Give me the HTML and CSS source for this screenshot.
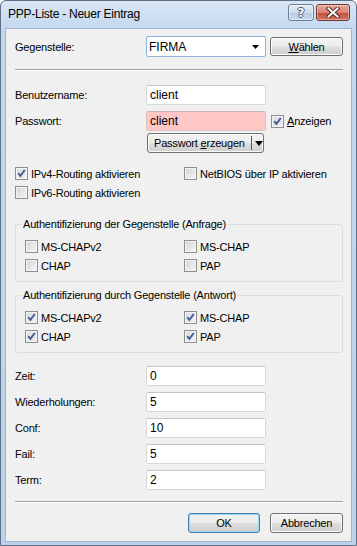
FILE: index.html
```html
<!DOCTYPE html>
<html lang="de">
<head>
<meta charset="utf-8">
<title>PPP-Liste - Neuer Eintrag</title>
<link rel="stylesheet" href="styles.css">
</head>
<body>
<div class="window">
  <div class="titlebar">
    <span class="title">PPP-Liste - Neuer Eintrag</span>
    <div class="caption-btns">
      <span class="cap help"><span class="q">?</span></span>
      <span class="cap close">
        <svg width="14" height="11" viewBox="0 0 14 11"><path d="M2.5 1.5 L11.5 9.5 M11.5 1.5 L2.5 9.5" stroke="#5a2620" stroke-width="4" stroke-linecap="square" fill="none"/><path d="M2.5 1.5 L11.5 9.5 M11.5 1.5 L2.5 9.5" stroke="#ffffff" stroke-width="2" stroke-linecap="square" fill="none"/></svg>
      </span>
    </div>
  </div>
  <div class="client">
    <div class="row-top">
      <span class="lbl">Gegenstelle:</span>
      <div class="combo"><span class="val">FIRMA</span><svg class="arr" width="7" height="4" viewBox="0 0 7 4"><path d="M0 0 H7 L3.5 4 Z" fill="#000"/></svg></div>
      <span class="btn btn-sm"><u>W</u>ählen</span>
    </div>
    <div class="sep sep-1"></div>
    <div class="frow mt14"><span class="lbl">Benutzername:</span><div class="tb">client</div></div>
    <div class="frow mt6"><span class="lbl">Passwort:</span><div class="tb pink">client</div>
      <span class="chk"><span class="cb on"><svg width="11" height="11" viewBox="0 0 11 11"><path d="M2.2 5.2 L4.4 7.8 L8.8 2" stroke="#4a5f97" stroke-width="2" fill="none"/></svg></span><span class="ct"><u>A</u>nzeigen</span></span>
    </div>
    <div class="genrow">
      <span class="btn split"><span class="main">Passwort <u>e</u>rzeugen</span><span class="div"></span><svg class="darr" width="8" height="5" viewBox="0 0 8 5"><path d="M0 0 H8 L4 5 Z" fill="#000"/></svg></span>
    </div>
    <div class="crow mt13">
      <span class="chk"><span class="cb on"><svg width="11" height="11" viewBox="0 0 11 11"><path d="M2.2 5.2 L4.4 7.8 L8.8 2" stroke="#4a5f97" stroke-width="2" fill="none"/></svg></span><span class="ct">IPv4-Routing aktivieren</span></span>
      <span class="chk"><span class="cb"></span><span class="ct">NetBIOS über IP aktivieren</span></span>
    </div>
    <div class="crow mt4">
      <span class="chk"><span class="cb"></span><span class="ct">IPv6-Routing aktivieren</span></span>
    </div>
    <fieldset class="grp g1">
      <legend>Authentifizierung der Gegenstelle (Anfrage)</legend>
      <div class="ggrid">
        <span class="chk"><span class="cb"></span><span class="ct">MS-CHAPv2</span></span>
        <span class="chk"><span class="cb"></span><span class="ct">MS-CHAP</span></span>
        <span class="chk"><span class="cb"></span><span class="ct">CHAP</span></span>
        <span class="chk"><span class="cb"></span><span class="ct">PAP</span></span>
      </div>
    </fieldset>
    <fieldset class="grp g2">
      <legend>Authentifizierung durch Gegenstelle (Antwort)</legend>
      <div class="ggrid">
        <span class="chk"><span class="cb on"><svg width="11" height="11" viewBox="0 0 11 11"><path d="M2.2 5.2 L4.4 7.8 L8.8 2" stroke="#4a5f97" stroke-width="2" fill="none"/></svg></span><span class="ct">MS-CHAPv2</span></span>
        <span class="chk"><span class="cb on"><svg width="11" height="11" viewBox="0 0 11 11"><path d="M2.2 5.2 L4.4 7.8 L8.8 2" stroke="#4a5f97" stroke-width="2" fill="none"/></svg></span><span class="ct">MS-CHAP</span></span>
        <span class="chk"><span class="cb on"><svg width="11" height="11" viewBox="0 0 11 11"><path d="M2.2 5.2 L4.4 7.8 L8.8 2" stroke="#4a5f97" stroke-width="2" fill="none"/></svg></span><span class="ct">CHAP</span></span>
        <span class="chk"><span class="cb on"><svg width="11" height="11" viewBox="0 0 11 11"><path d="M2.2 5.2 L4.4 7.8 L8.8 2" stroke="#4a5f97" stroke-width="2" fill="none"/></svg></span><span class="ct">PAP</span></span>
      </div>
    </fieldset>
    <div class="frow mt13"><span class="lbl">Zeit:</span><div class="tb">0</div></div>
    <div class="frow mt6"><span class="lbl">Wiederholungen:</span><div class="tb">5</div></div>
    <div class="frow mt6"><span class="lbl">Conf:</span><div class="tb">10</div></div>
    <div class="frow mt6"><span class="lbl">Fail:</span><div class="tb">5</div></div>
    <div class="frow mt6"><span class="lbl">Term:</span><div class="tb">2</div></div>
    <div class="sep sep-2"></div>
    <div class="btnrow">
      <span class="btn btn-ok">OK</span>
      <span class="btn btn-cancel">Abbrechen</span>
    </div>
  </div>
</div>
</body>
</html>
```
FILE: styles.css
```css
* { box-sizing: border-box; }
html, body { margin: 0; padding: 0; }
body {
  width: 357px;
  height: 546px;
  background: #ffffff;
  font-family: "Liberation Sans", Arial, sans-serif;
  font-size: 11px;
  letter-spacing: -0.2px;
  color: #000;
  overflow: hidden;
}
.window {
  width: 357px;
  height: 546px;
  border: 1px solid #5e7188;
  border-radius: 6px 6px 0 0;
  background: linear-gradient(#dae6f5 0, #c4d8ef 27px, #bdd2ea 100%);
  display: flex;
  flex-direction: column;
  padding: 0 4px 3px 4px;
}
.titlebar {
  height: 27px;
  display: flex;
  align-items: flex-start;
  justify-content: space-between;
  padding-left: 3px;
}
.title {
  font-size: 12px;
  letter-spacing: -0.25px;
  line-height: 15px;
  margin-top: 6px;
  color: #000;
}
.caption-btns {
  display: flex;
  gap: 2px;
  margin-top: 3px;
  margin-right: 2px;
}
.cap {
  height: 17px;
  border-radius: 3px;
  display: flex;
  align-items: center;
  justify-content: center;
}
.help {
  width: 26px;
  border: 1px solid #6c7d93;
  background: linear-gradient(#e3ebf5 0, #cddbec 50%, #b6c9e0 51%, #c7d8ec 100%);
  box-shadow: inset 0 0 0 1px rgba(255,255,255,0.5);
}
.help .q {
  font-family: "DejaVu Sans", sans-serif;
  font-weight: bold;
  font-size: 12px;
  line-height: 12px;
  color: #ffffff;
  letter-spacing: 0;
  text-shadow: 1px 0 0 #4b5a70, -1px 0 0 #4b5a70, 0 1px 0 #4b5a70, 0 -1px 0 #4b5a70;
}
.close {
  width: 34px;
  border: 1px solid #6f3a34;
  background: linear-gradient(#e8a89c 0, #d98372 50%, #c4513f 51%, #d0725f 100%);
  box-shadow: inset 0 0 0 1px rgba(255,255,255,0.35);
}
.client {
  flex: 1;
  background: #f0f0f0;
  border: 1px solid #a3b6cd;
  padding: 7px 8px 0 9px;
  display: flex;
  flex-direction: column;
}
.lbl { line-height: 14px; }
.row-top {
  display: grid;
  grid-template-columns: 131px 120px 1fr;
  align-items: center;
  height: 21px;
}
.combo {
  height: 21px;
  border: 1px solid #8fb4de;
  border-radius: 2px;
  background: #fff;
  display: flex;
  align-items: center;
  justify-content: space-between;
  padding: 0 6px 0 2px;
  font-size: 12px;
  letter-spacing: 0;
}
.combo .arr { margin-top: 1px; }
.btn {
  display: flex;
  align-items: center;
  justify-content: center;
  border: 1px solid #707070;
  border-radius: 3px;
  background: linear-gradient(#f3f3f3 0, #ebebeb 48%, #dddddd 52%, #cfcfcf 100%);
  box-shadow: inset 0 0 0 1px #fbfbfb;
  font-size: 11px;
  line-height: 14px;
}
.btn-sm { height: 19px; margin-left: 4px; }
.sep {
  height: 2px;
  border-top: 1px solid #a0a0a0;
  border-bottom: 1px solid #ffffff;
}
.sep-1 { margin-top: 12px; }
.sep-2 { margin-top: 11px; }
.frow {
  display: grid;
  grid-template-columns: 131px 120px auto;
  align-items: center;
  height: 20px;
}
.mt14 { margin-top: 14px; }
.mt13 { margin-top: 13px; }
.mt6 { margin-top: 6px; }
.mt4 { margin-top: 4px; }
.tb {
  height: 20px;
  border: 1px solid #d7d7d7;
  border-top-color: #c6c6c6;
  border-radius: 2px;
  background: #fff;
  font-size: 12px;
  letter-spacing: 0;
  line-height: 18px;
  padding-left: 3px;
}
.tb.pink {
  background: #ffc6c6;
  border-color: #d9c4c4;
  border-top-color: #c8b4b4;
}
.frow .chk { margin-left: 5px; }
.chk {
  display: flex;
  align-items: center;
  gap: 3px;
  height: 15px;
}
.ct { line-height: 14px; }
.cb {
  width: 13px;
  height: 13px;
  flex: none;
  border: 1px solid #8e8f8f;
  background: linear-gradient(135deg, #d3d3d3 0, #e9e9e9 60%, #f6f6f6 100%);
  box-shadow: inset 0 0 0 1px #f4f4f4;
  display: flex;
  align-items: center;
  justify-content: center;
}
.cb.on {
  background: linear-gradient(135deg, #d8dde6 0, #eef0f4 100%);
}
.cb svg { display: block; }
.genrow {
  margin-top: 2px;
  padding-left: 132px;
  height: 20px;
  display: flex;
}
.split {
  width: 117px;
  height: 20px;
  justify-content: flex-start;
  padding-left: 6px;
}
.split .main { width: 97px; }
.split .div {
  width: 1px;
  height: 14px;
  background: #555;
  margin-right: 3px;
}
.crow {
  display: grid;
  grid-template-columns: 169px auto;
  height: 15px;
}
.grp {
  margin: 17px 0 0 0;
  padding: 0;
  border: 1px solid #d5dfe5;
  border-radius: 3px;
  min-width: 0;
}
.grp.g2 { margin-top: 6px; }
.grp legend {
  margin-left: 6px;
  padding: 0 1px;
  line-height: 14px;
  font-size: 11px;
}
.ggrid {
  display: grid;
  grid-template-columns: 159px auto;
  row-gap: 4px;
  padding: 8px 9px 8px 9px;
}
.btnrow {
  margin-top: 10px;
  display: flex;
  justify-content: flex-end;
  gap: 10px;
}
.btn-ok {
  width: 72px;
  height: 20px;
  border-color: #3c7fb1;
  box-shadow: inset 0 0 0 1px #9ed8f6;
}
.btn-cancel {
  width: 73px;
  height: 20px;
}
```
